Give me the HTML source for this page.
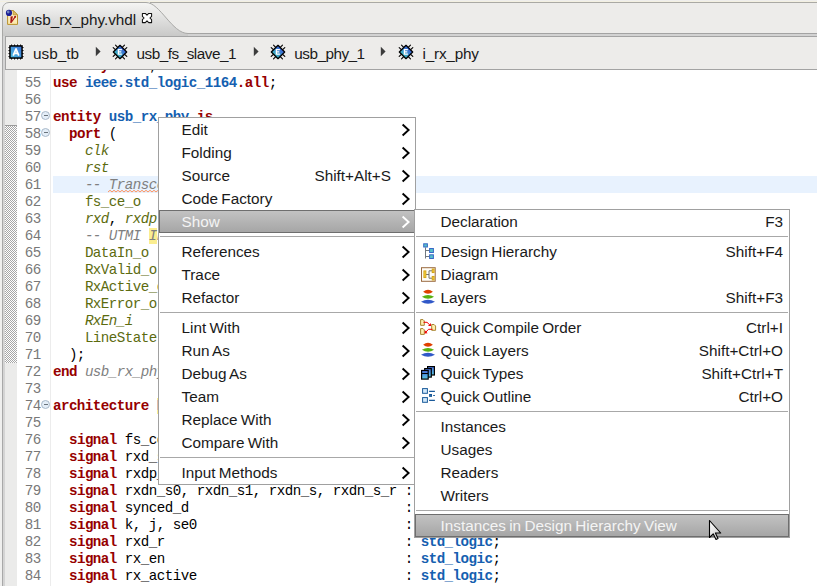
<!DOCTYPE html>
<html><head><meta charset="utf-8">
<style>
*{margin:0;padding:0;box-sizing:border-box}
html,body{width:817px;height:586px;overflow:hidden;background:#edecea;position:relative;font-family:"Liberation Sans",sans-serif}
.abs{position:absolute}
#topstrip{position:absolute;left:0;top:0;width:817px;height:2px;background:#f3f0e2;border-top:1px solid #efeeec}
#tabbar{position:absolute;left:0;top:2px;width:817px;height:31px;background:#edecea;border-top:1px solid #aaa9a4}
#frame-h{position:absolute;left:188px;top:33px;width:629px;height:4px;background:#d2d2d2;border-top:1px solid #a3a3a3;border-bottom:1px solid #a3a3a3}
#frame-v{position:absolute;left:2px;top:36px;width:3px;height:550px;background:#d4d4d4;border-left:1px solid #a8a8a8}
#leftpad{position:absolute;left:0;top:2px;width:2px;height:584px;background:#efefee}
#tab{position:absolute;left:2px;top:2px;width:200px;height:32px}
#tabtext{position:absolute;left:26px;top:8px;word-spacing:-1px;font-size:15.3px;line-height:23px;color:#1a1a1a;white-space:pre}
#crumb{position:absolute;left:5px;top:36px;width:812px;height:34px;background:#edecea;border-left:1px solid #a3a3a3;border-top:1px solid #a3a3a3;border-bottom:1px solid #a3a3a3}
.ct{position:absolute;top:42px;word-spacing:-1px;font-size:15.3px;line-height:23px;color:#1a1a1a;white-space:pre}
#editor{position:absolute;left:5px;top:70px;width:812px;height:516px;background:#fff;overflow:hidden}
#gutter{position:absolute;left:0;top:0;width:12px;height:516px;background:#ebebea}
#hatch{position:absolute;left:0;top:55px;width:12px;height:238px;border-top:1px solid #9a9a9a;
 background-image:linear-gradient(45deg,#a6a6a6 25%,transparent 25%,transparent 75%,#a6a6a6 75%),linear-gradient(45deg,#a6a6a6 25%,transparent 25%,transparent 75%,#a6a6a6 75%);background-size:2px 2px;background-position:0 0,1px 1px;background-color:#fff}
#rulerline{position:absolute;left:45px;top:0;width:1px;height:516px;background:#ececec}
#curline{position:absolute;left:48px;top:106px;width:770px;height:17px;background:#e8f2fe}
.cl{position:absolute;left:52.9px;height:17px;font-family:"Liberation Mono",monospace;font-size:14.2px;line-height:17px;letter-spacing:-0.52px;white-space:pre;color:#000;padding-top:1px}
.num{position:absolute;left:0;width:40.8px;text-align:right;height:17px;font-family:"Liberation Mono",monospace;font-size:14.2px;line-height:17px;letter-spacing:-0.52px;white-space:pre;color:#787878;padding-top:1px}
.k{color:#960000;font-weight:bold}
.b{color:#1560b0;font-weight:bold}
.bl{color:#1560b0}
.p{color:#5c6b0f}
.pi{color:#5c6b0f;font-style:italic}
.c{color:#7f7f7f;font-style:italic}
.ci{color:#7f7f7f;font-style:italic}
.csq{color:#7f7f7f;font-style:italic}
.bhl{color:#1560b0;font-weight:bold;background:#fbee90}
.chl{color:#7f7f7f;font-style:italic;background:#fbee90}
.fold{position:absolute;left:36px;width:9px;height:9px;border-radius:50%;background:#e4eef8;border:1px solid #a9b9c9}
.fold:after{content:"";position:absolute;left:1.5px;top:3.2px;width:4.5px;height:1.2px;background:#6a747c}
.menu{position:absolute;background:#fff;border:1px solid #a0a0a0;box-sizing:content-box}
.mi{position:absolute;left:0;right:0;height:23px}
.mi.hl{left:0;right:0;height:23px;background:linear-gradient(#c2c2c2,#a6a6a6);border:1px solid #6e6e6e}
.lab,.sc{position:absolute;top:0px;word-spacing:-1px;font-size:15.3px;line-height:23px;color:#1a1a1a;white-space:pre}
.hl .lab,.hl .sc{color:#f4f4f4;top:-1px}
.hl .lab{margin-left:-1px}
.sep{position:absolute;left:1px;right:1px;height:1px;background:#a8a8a8}
.chev{position:absolute;right:4px;top:4.5px}
.hl .chev{right:3px;top:3.5px}
.ic{position:absolute;top:2px;left:5px;line-height:0}
</style></head><body>
<div id="topstrip"></div>
<div id="tabbar"></div>
<div class="abs" style="left:0;top:2px;width:150px;height:34px;background:#efefee"></div>
<div id="leftpad"></div>
<div id="frame-h"></div>
<div id="frame-v"></div>
<svg id="tabsvg" class="abs" style="left:0;top:0" width="200" height="37" viewBox="0 0 200 37">
 <defs><linearGradient id="tabg" x1="0" y1="0" x2="0" y2="1"><stop offset="0" stop-color="#f5f5f4"/><stop offset="1" stop-color="#c9c9c8"/></linearGradient></defs>
 <path d="M2.5 36 V9 A6.5 6.5 0 0 1 9 2.5 H146 C160 2.5 172 33.5 188 33.5 V36 Z" fill="url(#tabg)" stroke="none"/>
 <path d="M2.5 37 V9 A6.5 6.5 0 0 1 9 2.5 H146 C160 2.5 172 33.5 188 33.5 H200" fill="none" stroke="#a8a8a6" stroke-width="1"/>
</svg>

<div id="tabtext">usb_rx_phy.vhdl</div>
<svg class="abs" style="left:4px;top:7px" width="18" height="20" viewBox="0 0 18 20"><defs><linearGradient id="docg" x1="0" y1="0" x2="0" y2="1"><stop offset="0" stop-color="#fff6d0"/><stop offset="1" stop-color="#fbe7a8"/></linearGradient></defs><path d="M3.6 3.6H9.2L13.5 7.8V17.4H3.6Z" fill="url(#docg)" stroke="#b8902c" stroke-width="1"/><path d="M9.2 3.6V7.8H13.5Z" fill="#e2c070" stroke="#b8902c" stroke-width="0.8" stroke-linejoin="round"/><path d="M6.6 9.6L8.9 9.3L7.5 15.9L6.3 15.9Z" fill="#a81414"/><path d="M7.2 15.4L11.3 9.6" stroke="#a81414" stroke-width="1.1"/><circle cx="11.2" cy="9.7" r="1" fill="#a81414"/><circle cx="5" cy="5.9" r="3.1" fill="#1b1f96"/><circle cx="4.2" cy="5" r="1.4" fill="#7f95c8" opacity="0.85"/></svg>
<svg class="abs" style="left:141px;top:12px" width="12" height="12" viewBox="0 0 12 12"><path d="M1.4 1.4H4.3L6 3.1L7.7 1.4H10.6V4.3L8.9 6L10.6 7.7V10.6H7.7L6 8.9L4.3 10.6H1.4V7.7L3.1 6L1.4 4.3Z" fill="#fff" stroke="#111" stroke-width="1.05" stroke-linejoin="round"/></svg>
<div id="crumb"></div>
<svg class="abs" style="left:6px;top:42px" width="20" height="20" viewBox="0 0 20 20"><defs><linearGradient id="ag" x1="0" y1="1" x2="1" y2="0"><stop offset="0" stop-color="#50c0e0"/><stop offset="1" stop-color="#3a70d8"/></linearGradient></defs><rect x="2" y="2" width="16" height="16" rx="3" fill="#fff" opacity="0.75"/><rect x="3.95" y="3.95" width="12.1" height="12.1" fill="url(#ag)" stroke="#000" stroke-width="1.5"/><g fill="#000"><rect x="5" y="2.5" width="1.1" height="1.3"/><rect x="8" y="2.5" width="1.1" height="1.3"/><rect x="11" y="2.5" width="1.1" height="1.3"/><rect x="14" y="2.5" width="1.1" height="1.3"/><rect x="5" y="16.2" width="1.1" height="1.3"/><rect x="8" y="16.2" width="1.1" height="1.3"/><rect x="11" y="16.2" width="1.1" height="1.3"/><rect x="14" y="16.2" width="1.1" height="1.3"/><rect x="2.5" y="5" width="1.3" height="1.1"/><rect x="2.5" y="8" width="1.3" height="1.1"/><rect x="2.5" y="11" width="1.3" height="1.1"/><rect x="2.5" y="14" width="1.3" height="1.1"/><rect x="16.2" y="5" width="1.3" height="1.1"/><rect x="16.2" y="8" width="1.3" height="1.1"/><rect x="16.2" y="11" width="1.3" height="1.1"/><rect x="16.2" y="14" width="1.3" height="1.1"/></g><path d="M7.2 13.6L10 6.9L12.8 13.6M8.2 11.3H11.8" stroke="#fff" stroke-width="1.7" fill="none" stroke-linejoin="round"/></svg>
<div class="ct" style="left:33px;letter-spacing:0px">usb_tb</div>
<svg class="abs" style="left:95.0px;top:46px" width="7" height="11" viewBox="0 0 7 11"><path d="M0.8 0.8L5.6 5.5L0.8 10.2Z" fill="#3c3c3c"/></svg>
<svg class="abs" style="left:110.0px;top:42px" width="20" height="20" viewBox="0 0 20 20"><defs><linearGradient id="cg120" x1="0" y1="1" x2="1" y2="0"><stop offset="0.2" stop-color="#3cc0c0"/><stop offset="0.8" stop-color="#3a58d8"/></linearGradient></defs><path d="M5.38 7.72L3.18 5.52M7.72 5.38L5.52 3.18M12.28 5.38L14.48 3.18M14.62 7.72L16.82 5.52M14.62 12.28L16.82 14.48M12.28 14.62L14.48 16.82M7.72 14.62L5.52 16.82M5.38 12.28L3.18 14.48" stroke="#000" stroke-width="1.1" stroke-linecap="round"/><path d="M10 3.3L16.7 10L10 16.7L3.3 10Z" fill="url(#cg120)" stroke="#000" stroke-width="1.25" stroke-linejoin="round"/><path d="M11.9 7.6H8.4V12.1H11.9M8.4 9.8H11.3" stroke="#fff" stroke-width="1.3" fill="none"/></svg>
<div class="ct" style="left:136.5px;letter-spacing:-0.49px">usb_fs_slave_1</div>
<svg class="abs" style="left:253.0px;top:46px" width="7" height="11" viewBox="0 0 7 11"><path d="M0.8 0.8L5.6 5.5L0.8 10.2Z" fill="#3c3c3c"/></svg>
<svg class="abs" style="left:268.2px;top:42px" width="20" height="20" viewBox="0 0 20 20"><defs><linearGradient id="cg278" x1="0" y1="1" x2="1" y2="0"><stop offset="0.2" stop-color="#3cc0c0"/><stop offset="0.8" stop-color="#3a58d8"/></linearGradient></defs><path d="M5.38 7.72L3.18 5.52M7.72 5.38L5.52 3.18M12.28 5.38L14.48 3.18M14.62 7.72L16.82 5.52M14.62 12.28L16.82 14.48M12.28 14.62L14.48 16.82M7.72 14.62L5.52 16.82M5.38 12.28L3.18 14.48" stroke="#000" stroke-width="1.1" stroke-linecap="round"/><path d="M10 3.3L16.7 10L10 16.7L3.3 10Z" fill="url(#cg278)" stroke="#000" stroke-width="1.25" stroke-linejoin="round"/><path d="M11.9 7.6H8.4V12.1H11.9M8.4 9.8H11.3" stroke="#fff" stroke-width="1.3" fill="none"/></svg>
<div class="ct" style="left:294.3px;letter-spacing:-0.51px">usb_phy_1</div>
<svg class="abs" style="left:380.0px;top:46px" width="7" height="11" viewBox="0 0 7 11"><path d="M0.8 0.8L5.6 5.5L0.8 10.2Z" fill="#3c3c3c"/></svg>
<svg class="abs" style="left:396.2px;top:42px" width="20" height="20" viewBox="0 0 20 20"><defs><linearGradient id="cg406" x1="0" y1="1" x2="1" y2="0"><stop offset="0.2" stop-color="#3cc0c0"/><stop offset="0.8" stop-color="#3a58d8"/></linearGradient></defs><path d="M5.38 7.72L3.18 5.52M7.72 5.38L5.52 3.18M12.28 5.38L14.48 3.18M14.62 7.72L16.82 5.52M14.62 12.28L16.82 14.48M12.28 14.62L14.48 16.82M7.72 14.62L5.52 16.82M5.38 12.28L3.18 14.48" stroke="#000" stroke-width="1.1" stroke-linecap="round"/><path d="M10 3.3L16.7 10L10 16.7L3.3 10Z" fill="url(#cg406)" stroke="#000" stroke-width="1.25" stroke-linejoin="round"/><path d="M11.9 7.6H8.4V12.1H11.9M8.4 9.8H11.3" stroke="#fff" stroke-width="1.3" fill="none"/></svg>
<div class="ct" style="left:422.5px;letter-spacing:-0.2px">i_rx_phy</div>
<div id="editor">
 <div id="gutter"></div>
 <div id="hatch"></div>
 <div id="curline"></div>
 <div id="rulerline"></div>
</div>
<div class="abs" style="left:0;top:70px;width:817px;height:516px;overflow:hidden">
<div class="abs" style="left:0;top:-70px;width:817px;height:586px">
<div class="cl" style="top:57px"><span class="k">library</span> <span class="b">ieee</span>;</div>
<div class="cl" style="top:74px"><span class="k">use</span> <span class="b">ieee</span><span class="b">.std_logic_1164</span><span class="k">.all</span>;</div>
<div class="num" style="top:74px">55</div>
<div class="cl" style="top:91px"></div>
<div class="num" style="top:91px">56</div>
<div class="cl" style="top:108px"><span class="k">entity</span> <span class="b">usb_rx_phy</span> <span class="k">is</span></div>
<div class="num" style="top:108px">57</div>
<div class="cl" style="top:125px">  <span class="k">port</span> (</div>
<div class="num" style="top:125px">58</div>
<div class="cl" style="top:142px">    <span class="pi">clk</span>          : <span class="k">in</span> <span class="b">std_logic</span>;</div>
<div class="num" style="top:142px">59</div>
<div class="cl" style="top:159px">    <span class="pi">rst</span>          : <span class="k">in</span> <span class="b">std_logic</span>;</div>
<div class="num" style="top:159px">60</div>
<div class="cl" style="top:176px">    <span class="c">-- </span><span class="csq">Transceiver interface</span></div>
<div class="num" style="top:176px">61</div>
<div class="cl" style="top:193px">    <span class="p">fs_ce_o</span>      : <span class="k">out</span> <span class="b">std_logic</span>;</div>
<div class="num" style="top:193px">62</div>
<div class="cl" style="top:210px">    <span class="pi">rxd</span>, <span class="pi">rxdp</span>, <span class="pi">rxdn</span> : <span class="k">in</span> <span class="b">std_logic</span>;</div>
<div class="num" style="top:210px">63</div>
<div class="cl" style="top:227px">    <span class="c">-- UTMI </span><span class="chl">I</span><span class="c">nterface</span></div>
<div class="num" style="top:227px">64</div>
<div class="cl" style="top:244px">    <span class="p">DataIn_o</span>     : <span class="k">out</span> <span class="b">std_logic_vector</span>;</div>
<div class="num" style="top:244px">65</div>
<div class="cl" style="top:261px">    <span class="p">RxValid_o</span>    : <span class="k">out</span> <span class="b">std_logic</span>;</div>
<div class="num" style="top:261px">66</div>
<div class="cl" style="top:278px">    <span class="p">RxActive_o</span>   : <span class="k">out</span> <span class="b">std_logic</span>;</div>
<div class="num" style="top:278px">67</div>
<div class="cl" style="top:295px">    <span class="p">RxError_o</span>    : <span class="k">out</span> <span class="b">std_logic</span>;</div>
<div class="num" style="top:295px">68</div>
<div class="cl" style="top:312px">    <span class="pi">RxEn_i</span>       : <span class="k">in</span> <span class="b">std_logic</span>;</div>
<div class="num" style="top:312px">69</div>
<div class="cl" style="top:329px">    <span class="p">LineState</span>    : <span class="k">out</span> <span class="b">std_logic_vector</span>;</div>
<div class="num" style="top:329px">70</div>
<div class="cl" style="top:346px">  );</div>
<div class="num" style="top:346px">71</div>
<div class="cl" style="top:363px"><span class="k">end</span> <span class="ci">usb_rx_phy</span>;</div>
<div class="num" style="top:363px">72</div>
<div class="cl" style="top:380px"></div>
<div class="num" style="top:380px">73</div>
<div class="cl" style="top:397px"><span class="k">architecture</span> <span class="bhl">RTL</span> <span class="k">of</span> <span class="b">usb_rx_phy</span> <span class="k">is</span></div>
<div class="num" style="top:397px">74</div>
<div class="cl" style="top:414px"></div>
<div class="num" style="top:414px">75</div>
<div class="cl" style="top:431px">  <span class="k">signal</span> fs_ce_d, fs_ce                      <span class=" "></span>: <span class="b">std_logic</span>;</div>
<div class="num" style="top:431px">76</div>
<div class="cl" style="top:448px">  <span class="k">signal</span> rxd_s0, rxd_s1, rxd_s               : <span class="b">std_logic</span>;</div>
<div class="num" style="top:448px">77</div>
<div class="cl" style="top:465px">  <span class="k">signal</span> rxdp_s0, rxdp_s1, rxdp_s, rxdp_s_r : <span class="b">std_logic</span>;</div>
<div class="num" style="top:465px">78</div>
<div class="cl" style="top:482px">  <span class="k">signal</span> rxdn_s0, rxdn_s1, rxdn_s, rxdn_s_r : <span class="b">std_logic</span>;</div>
<div class="num" style="top:482px">79</div>
<div class="cl" style="top:499px">  <span class="k">signal</span> synced_d                           : <span class="b">std_logic</span>;</div>
<div class="num" style="top:499px">80</div>
<div class="cl" style="top:516px">  <span class="k">signal</span> k, j, se0                          : <span class="b">std_logic</span>;</div>
<div class="num" style="top:516px">81</div>
<div class="cl" style="top:533px">  <span class="k">signal</span> rxd_r                              : <span class="b">std_logic</span>;</div>
<div class="num" style="top:533px">82</div>
<div class="cl" style="top:550px">  <span class="k">signal</span> rx_en                              : <span class="b">std_logic</span>;</div>
<div class="num" style="top:550px">83</div>
<div class="cl" style="top:567px">  <span class="k">signal</span> rx_active                          : <span class="b">std_logic</span>;</div>
<div class="num" style="top:567px">84</div>
<div class="cl" style="top:584px">  <span class="k">signal</span> rx_valid                           : <span class="b">std_logic</span>;</div>
<div class="num" style="top:584px">85</div>
<div class="fold" style="top:111px;left:41px"></div>
<div class="fold" style="top:128px;left:41px"></div>
<div class="fold" style="top:400px;left:41px"></div>
<svg class="abs" style="left:0;top:0" width="817" height="586"><polyline points="108.0,192.0 110.0,190.3 112.0,192.0 114.0,190.3 116.0,192.0 118.0,190.3 120.0,192.0 122.0,190.3 124.0,192.0 126.0,190.3 128.0,192.0 130.0,190.3 132.0,192.0 134.0,190.3 136.0,192.0 138.0,190.3 140.0,192.0 142.0,190.3 144.0,192.0 146.0,190.3 148.0,192.0 150.0,190.3 152.0,192.0 154.0,190.3 156.0,192.0 158.0,190.3 160.0,192.0 162.0,190.3" fill="none" stroke="#ff8a50" stroke-width="1" opacity="0.9"/></svg>
</div></div>
<div class="menu" style="left:158px;top:117px;width:256px;height:366px">
<div class="mi" style="top:0px"><span class="lab" style="left:22.5px">Edit</span><svg class="chev" width="10" height="14" viewBox="0 0 10 14"><path d="M1.6 1.5L7.6 7L1.6 12.5" stroke="#000" stroke-width="1.9" fill="none"/></svg></div>
<div class="mi" style="top:23px"><span class="lab" style="left:22.5px">Folding</span><svg class="chev" width="10" height="14" viewBox="0 0 10 14"><path d="M1.6 1.5L7.6 7L1.6 12.5" stroke="#000" stroke-width="1.9" fill="none"/></svg></div>
<div class="mi" style="top:46px"><span class="lab" style="left:22.5px">Source</span><span class="sc" style="right:24.0px">Shift+Alt+S</span><svg class="chev" width="10" height="14" viewBox="0 0 10 14"><path d="M1.6 1.5L7.6 7L1.6 12.5" stroke="#000" stroke-width="1.9" fill="none"/></svg></div>
<div class="mi" style="top:69px"><span class="lab" style="left:22.5px">Code Factory</span><svg class="chev" width="10" height="14" viewBox="0 0 10 14"><path d="M1.6 1.5L7.6 7L1.6 12.5" stroke="#000" stroke-width="1.9" fill="none"/></svg></div>
<div class="mi hl" style="top:92px"><span class="lab" style="left:22.5px">Show</span><svg class="chev" width="10" height="14" viewBox="0 0 10 14"><path d="M1.6 1.5L7.6 7L1.6 12.5" stroke="#fff" stroke-width="1.9" fill="none"/></svg></div>
<div class="sep" style="top:118px"></div>
<div class="mi" style="top:122px"><span class="lab" style="left:22.5px">References</span><svg class="chev" width="10" height="14" viewBox="0 0 10 14"><path d="M1.6 1.5L7.6 7L1.6 12.5" stroke="#000" stroke-width="1.9" fill="none"/></svg></div>
<div class="mi" style="top:145px"><span class="lab" style="left:22.5px">Trace</span><svg class="chev" width="10" height="14" viewBox="0 0 10 14"><path d="M1.6 1.5L7.6 7L1.6 12.5" stroke="#000" stroke-width="1.9" fill="none"/></svg></div>
<div class="mi" style="top:168px"><span class="lab" style="left:22.5px">Refactor</span><svg class="chev" width="10" height="14" viewBox="0 0 10 14"><path d="M1.6 1.5L7.6 7L1.6 12.5" stroke="#000" stroke-width="1.9" fill="none"/></svg></div>
<div class="sep" style="top:194px"></div>
<div class="mi" style="top:198px"><span class="lab" style="left:22.5px">Lint With</span><svg class="chev" width="10" height="14" viewBox="0 0 10 14"><path d="M1.6 1.5L7.6 7L1.6 12.5" stroke="#000" stroke-width="1.9" fill="none"/></svg></div>
<div class="mi" style="top:221px"><span class="lab" style="left:22.5px">Run As</span><svg class="chev" width="10" height="14" viewBox="0 0 10 14"><path d="M1.6 1.5L7.6 7L1.6 12.5" stroke="#000" stroke-width="1.9" fill="none"/></svg></div>
<div class="mi" style="top:244px"><span class="lab" style="left:22.5px">Debug As</span><svg class="chev" width="10" height="14" viewBox="0 0 10 14"><path d="M1.6 1.5L7.6 7L1.6 12.5" stroke="#000" stroke-width="1.9" fill="none"/></svg></div>
<div class="mi" style="top:267px"><span class="lab" style="left:22.5px">Team</span><svg class="chev" width="10" height="14" viewBox="0 0 10 14"><path d="M1.6 1.5L7.6 7L1.6 12.5" stroke="#000" stroke-width="1.9" fill="none"/></svg></div>
<div class="mi" style="top:290px"><span class="lab" style="left:22.5px">Replace With</span><svg class="chev" width="10" height="14" viewBox="0 0 10 14"><path d="M1.6 1.5L7.6 7L1.6 12.5" stroke="#000" stroke-width="1.9" fill="none"/></svg></div>
<div class="mi" style="top:313px"><span class="lab" style="left:22.5px">Compare With</span><svg class="chev" width="10" height="14" viewBox="0 0 10 14"><path d="M1.6 1.5L7.6 7L1.6 12.5" stroke="#000" stroke-width="1.9" fill="none"/></svg></div>
<div class="sep" style="top:339px"></div>
<div class="mi" style="top:343px"><span class="lab" style="left:22.5px">Input Methods</span><svg class="chev" width="10" height="14" viewBox="0 0 10 14"><path d="M1.6 1.5L7.6 7L1.6 12.5" stroke="#000" stroke-width="1.9" fill="none"/></svg></div>
</div>
<div class="menu" style="left:414px;top:209px;width:374px;height:327px">
<div class="mi" style="top:0px"><span class="lab" style="left:25.5px">Declaration</span><span class="sc" style="right:6.0px">F3</span></div>
<div class="sep" style="top:26px"></div>
<div class="mi" style="top:30px"><span class="lab" style="left:25.5px">Design Hierarchy</span><span class="sc" style="right:6.0px">Shift+F4</span><span class="ic ic-dh"><svg width="18" height="20" viewBox="0 0 18 20"><path d="M5.5 5.4V16.5M5.5 8.5H9.6M5.5 14.5H9.6" stroke="#707880" stroke-width="1" fill="none"/><rect x="3.7" y="1.8" width="3.7" height="3.2" fill="#58c0c8" stroke="#3868c8"/><rect x="9.6" y="6.5" width="3.8" height="4" fill="#58c0c8" stroke="#3868c8"/><rect x="9.6" y="12.8" width="3.8" height="3.7" fill="#58c0c8" stroke="#3868c8"/></svg></span></div>
<div class="mi" style="top:53px"><span class="lab" style="left:25.5px">Diagram</span><span class="ic ic-diag"><svg width="18" height="20" viewBox="0 0 18 20"><rect x="1.5" y="2.7" width="13.7" height="13.6" fill="#fffdf6" stroke="#9a6a40"/><path d="M6 9.5H9M9 5.8V13.2M9 5.8H12.4M9 13.2H12.4" stroke="#707070" fill="none"/><rect x="3.9" y="5.9" width="2" height="6.7" fill="#f8d040" stroke="#d0a010" stroke-width="0.9"/><rect x="12.2" y="4" width="1.9" height="3.6" fill="#f8d040" stroke="#d0a010" stroke-width="0.9"/><rect x="12.2" y="11.4" width="1.9" height="3.6" fill="#f8d040" stroke="#d0a010" stroke-width="0.9"/></svg></span></div>
<div class="mi" style="top:76px"><span class="lab" style="left:25.5px">Layers</span><span class="sc" style="right:6.0px">Shift+F3</span><span class="ic ic-layers"><svg width="18" height="20" viewBox="0 0 18 20"><path d="M3.10 3.85Q8.00 -0.15 12.90 3.85Q8.00 7.85 3.10 3.85Z" fill="#e04000"/><path d="M1.90 8.85Q8.00 4.95 14.10 8.85Q8.00 12.75 1.90 8.85Z" fill="#58b010"/><path d="M1.00 13.85Q8.00 9.85 15.00 13.85Q8.00 17.85 1.00 13.85Z" fill="#3058c8"/></svg></span></div>
<div class="sep" style="top:102px"></div>
<div class="mi" style="top:106px"><span class="lab" style="left:25.5px">Quick Compile Order</span><span class="sc" style="right:6.0px">Ctrl+I</span><span class="ic ic-qco"><svg width="18" height="20" viewBox="0 0 18 20"><g fill="#fff0b0" stroke="#a88430" stroke-width="1"><path d="M0.6 1.6H3L4.3 2.9V7.3H0.6Z"/><path d="M11.7 6.5H14.1L15.6 8V12.3H11.7Z"/><path d="M0.6 10.6H3L4.3 11.9V16.4H0.6Z"/></g><g stroke="#f00000" stroke-width="1" fill="none"><path d="M3.5 4.3H7L9.6 6.8"/><path d="M12.5 11.3H8.5L6 14"/></g><g fill="#f00000"><path d="M11 7.9L8 7.9L10.8 5Z"/><path d="M4.6 15.4L4.9 12.3L7.6 15.2Z"/></g></svg></span></div>
<div class="mi" style="top:129px"><span class="lab" style="left:25.5px">Quick Layers</span><span class="sc" style="right:6.0px">Shift+Ctrl+O</span><span class="ic ic-layers"><svg width="18" height="20" viewBox="0 0 18 20"><path d="M3.10 3.85Q8.00 -0.15 12.90 3.85Q8.00 7.85 3.10 3.85Z" fill="#e04000"/><path d="M1.90 8.85Q8.00 4.95 14.10 8.85Q8.00 12.75 1.90 8.85Z" fill="#58b010"/><path d="M1.00 13.85Q8.00 9.85 15.00 13.85Q8.00 17.85 1.00 13.85Z" fill="#3058c8"/></svg></span></div>
<div class="mi" style="top:152px"><span class="lab" style="left:25.5px">Quick Types</span><span class="sc" style="right:6.0px">Shift+Ctrl+T</span><span class="ic ic-qt"><svg width="18" height="20" viewBox="0 0 18 20"><defs><linearGradient id="g1" x1="0" y1="0" x2="0" y2="1"><stop offset="0" stop-color="#4a70e0"/><stop offset="1" stop-color="#58c8e0"/></linearGradient></defs><g stroke="#000" stroke-width="1.2" fill="url(#g1)"><rect x="7.6" y="2.6" width="6.8" height="8.4"/><rect x="4.7" y="4.6" width="6.6" height="8.5"/><rect x="1.6" y="6.5" width="6.6" height="8.6"/></g><path d="M2 9.5H8" stroke="#000" stroke-width="1.1"/></svg></span></div>
<div class="mi" style="top:175px"><span class="lab" style="left:25.5px">Quick Outline</span><span class="sc" style="right:6.0px">Ctrl+O</span><span class="ic ic-qo"><svg width="18" height="20" viewBox="0 0 18 20"><g fill="#d4eafc" stroke="#1a5a9a" stroke-width="1"><rect x="2.6" y="1.6" width="4.8" height="4.7"/><rect x="2.6" y="10.6" width="4.8" height="4.7"/><rect x="9.6" y="7.5" width="1.9" height="1.9" fill="#fff"/></g><path d="M9.1 4.4H14.9M9.1 13.4H14.9M13.2 8.5H14.9" stroke="#1a5a9a" stroke-width="1.1"/></svg></span></div>
<div class="sep" style="top:201px"></div>
<div class="mi" style="top:205px"><span class="lab" style="left:25.5px">Instances</span></div>
<div class="mi" style="top:228px"><span class="lab" style="left:25.5px">Usages</span></div>
<div class="mi" style="top:251px"><span class="lab" style="left:25.5px">Readers</span></div>
<div class="mi" style="top:274px"><span class="lab" style="left:25.5px">Writers</span></div>
<div class="sep" style="top:300px"></div>
<div class="mi hl" style="top:304px"><span class="lab" style="left:25.5px">Instances in Design Hierarchy View</span></div>
</div>
<svg class="abs" style="left:707px;top:518px" width="18" height="24" viewBox="0 0 18 24"><defs><linearGradient id="curg" x1="0" y1="0" x2="1" y2="1"><stop offset="0" stop-color="#fff"/><stop offset="1" stop-color="#c8c8c8"/></linearGradient></defs><path d="M2.5 2.5V19.5L6.2 15.8L9 21.5L11 20.6L8.4 15H13.7Z" fill="url(#curg)" stroke="#000" stroke-width="1.1" stroke-linejoin="round"/></svg>
</body></html>
